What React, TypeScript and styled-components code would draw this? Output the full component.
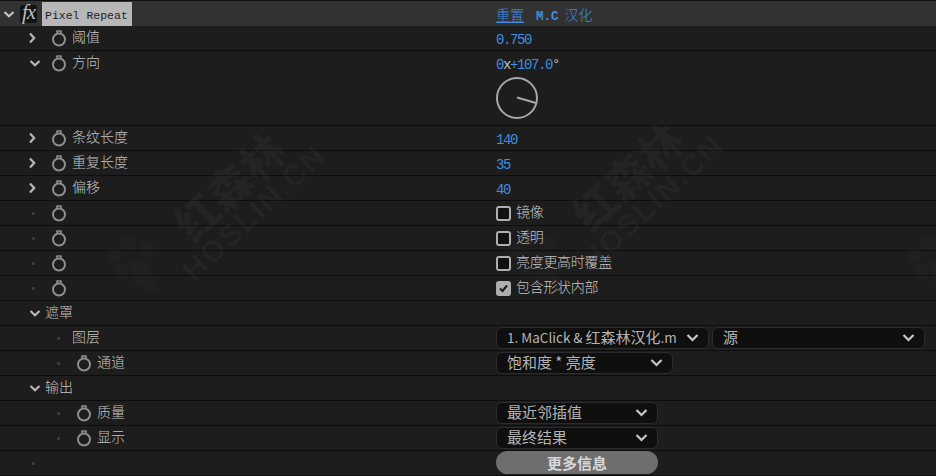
import React from 'react';
import styled, { createGlobalStyle } from 'styled-components';

const GlobalStyle = createGlobalStyle`
    html, body {
        margin: 0;
        padding: 0;
        background: #1d1d1d;
    }
`;

const CJK = `"Noto Sans CJK SC", "Liberation Sans", sans-serif`;
const MONO = `"Liberation Mono", "Noto Sans CJK SC", monospace`;

const Panel = styled.div`
    position: relative;
    width: 936px;
    height: 476px;
    overflow: hidden;
    background: #1d1d1d;
    border-top: 1px solid #0d0d0d;
    box-sizing: border-box;
    font-family: ${CJK};
    font-size: 14px;
    font-weight: 300;
    color: #c2c2c2;
`;

const HeaderRow = styled.div`
    display: grid;
    grid-template-columns: 496px 1fr;
    height: 25px;
    background: #323232;
`;

const HeaderName = styled.div`
    display: flex;
    align-items: center;
    padding-left: 3px;
`;

const FxBadge = styled.div`
    width: 17px;
    height: 18px;
    margin-left: 4px;
    border-radius: 3px;
    background: #131313;
    color: #bcbcbc;
    font-family: "Liberation Serif", serif;
    font-style: italic;
    font-size: 21px;
    line-height: 15px;
    letter-spacing: -1px;
    text-align: center;
`;

const EffectName = styled.div`
    width: 90px;
    height: 24px;
    margin-left: 5px;
    box-sizing: border-box;
    padding: 3px 0 0 3px;
    background: #b7b7b7;
    color: #222;
    font-family: ${MONO};
    font-size: 11.5px;
    line-height: 22px;
    white-space: nowrap;
`;

const HeaderValue = styled.div`
    display: flex;
    align-items: center;
    gap: 12px;
    color: #3f8ee0;
`;

const ResetLink = styled.span`
    text-decoration: underline;
    text-underline-offset: 2px;
`;

const CreditText = styled.span`
    white-space: pre;
`;

const CreditLatin = styled.span`
    font-family: ${MONO};
    font-size: 12.5px;
    font-weight: 700;
    margin-right: 6px;
`;

const Row = styled.div<{ $tall?: boolean }>`
    display: grid;
    grid-template-columns: 496px 1fr;
    height: ${(p) => (p.$tall ? 75 : 25)}px;
    box-sizing: border-box;
    border-bottom: 1px solid #0d0d0d;
`;

const NameCell = styled.div<{ $indent: number }>`
    display: flex;
    align-items: flex-start;
    height: 24px;
    padding-left: ${(p) => p.$indent}px;
`;

const TwirlSlot = styled.div<{ $width: number; $pad?: number }>`
    display: flex;
    align-items: center;
    flex: none;
    width: ${(p) => p.$width}px;
    height: 24px;
    box-sizing: border-box;
    padding-left: ${(p) => p.$pad ?? 0}px;
`;

const Dot = styled.span`
    width: 3px;
    height: 3px;
    margin-left: 7px;
    background: #3a3a3a;
`;

const WatchSlot = styled.div`
    display: flex;
    align-items: center;
    flex: none;
    width: 22px;
    height: 24px;
    padding-left: 1px;
    box-sizing: border-box;
`;

const Label = styled.span`
    line-height: 20px;
    white-space: nowrap;
`;

const ValueCell = styled.div`
    display: flex;
    flex-direction: column;
    align-items: flex-start;
    min-width: 0;
`;

const NumberValue = styled.div`
    height: 24px;
    padding-top: 4px;
    box-sizing: border-box;
    font-family: ${MONO};
    font-size: 14px;
    line-height: 20px;
    letter-spacing: -1.4px;
    color: #3f8ee0;
`;

const Multiplier = styled.span`
    color: #c2c2c2;
`;

const Dial = styled.svg`
    display: block;
    margin-top: 2px;
`;

const CheckRow = styled.label`
    display: flex;
    align-items: center;
    gap: 5px;
    height: 24px;
`;

const CheckLabel = styled.span`
    padding-bottom: 4px;
    letter-spacing: -0.3px;
    white-space: nowrap;
`;

const CheckBox = styled.span<{ $checked?: boolean }>`
    display: flex;
    align-items: center;
    justify-content: center;
    width: 15px;
    height: 15px;
    box-sizing: border-box;
    border: 2px solid #aeaeae;
    border-radius: 3px;
    background: ${(p) => (p.$checked ? '#aeaeae' : '#111')};
`;

const SelectRow = styled.div`
    display: flex;
    gap: 3px;
    padding-top: 1px;
`;

const Select = styled.div<{ $width: number }>`
    display: flex;
    align-items: center;
    gap: 9px;
    width: ${(p) => p.$width}px;
    height: 22px;
    box-sizing: border-box;
    padding: 0 9px 0 10px;
    background: #0f0f0f;
    border: 1px solid #2b2b2b;
    border-radius: 6px;
    color: #b4b4b4;
`;

const SelectText = styled.span`
    flex: 1;
    min-width: 0;
    height: 20px;
    margin-bottom: 3px;
    overflow: hidden;
    white-space: nowrap;
    font-size: 15px;
    font-weight: 400;
    line-height: 20px;
`;

const SelectLatin = styled.span`
    font-size: 13.5px;
`;

const MoreButton = styled.div`
    width: 162px;
    height: 23px;
    border-radius: 12px;
    background: #6e6e6e;
    color: #d8d8d8;
    font-weight: 700;
    font-size: 15px;
    line-height: 23px;
    text-align: center;
`;

const Watermark = styled.div<{ $x: number; $y: number }>`
    position: absolute;
    left: ${(p) => p.$x}px;
    top: ${(p) => p.$y}px;
    transform: rotate(-43deg);
    transform-origin: center;
    text-align: center;
    color: rgba(255, 255, 255, 0.03);
    pointer-events: none;
    white-space: nowrap;
`;

const WatermarkTitle = styled.div`
    font-family: ${CJK};
    font-size: 44px;
    font-weight: 900;
    line-height: 46px;
`;

const WatermarkSub = styled.div`
    font-family: "Liberation Sans", sans-serif;
    font-size: 30px;
    font-weight: 700;
    line-height: 30px;
    letter-spacing: 2px;
`;

const Blob = styled.svg<{ $x: number; $y: number }>`
    position: absolute;
    left: ${(p) => p.$x}px;
    top: ${(p) => p.$y}px;
    pointer-events: none;
`;

const Chevron: React.FC<{ open: boolean; strong?: boolean }> = ({ open, strong }) => (
    <svg width="12" height="12" viewBox="0 0 12 12" style={{ flex: 'none' }}>
        <path
            d={open ? 'M1.5 4 L6 8.2 L10.5 4' : 'M4 1.5 L8.2 6 L4 10.5'}
            fill="none"
            stroke={strong ? '#c4c4c4' : '#b8b8b8'}
            strokeWidth="2.2"
        />
    </svg>
);

const Stopwatch: React.FC = () => (
    <svg width="16" height="18" viewBox="0 0 16 18">
        <circle cx="8" cy="10.5" r="6" fill="none" stroke="#8e8e8e" strokeWidth="2" />
        <path d="M5.5 2 H10.5 M5.5 2 L6.5 4.5 M10.5 2 L9.5 4.5" fill="none" stroke="#8e8e8e" strokeWidth="1.5" />
    </svg>
);

const SmallChevron: React.FC = () => (
    <svg width="13" height="10" viewBox="0 0 13 10" style={{ flex: 'none' }}>
        <path d="M1.5 2 L6.5 7 L11.5 2" fill="none" stroke="#c8c8c8" strokeWidth="2.2" />
    </svg>
);

const Paw: React.FC<{ x: number; y: number }> = ({ x, y }) => (
    <Blob $x={x} $y={y} width="70" height="70" viewBox="0 0 80 80" fill="rgba(255,255,255,0.014)">
        <circle cx="14" cy="30" r="8" />
        <circle cx="30" cy="16" r="10" />
        <circle cx="50" cy="22" r="9" />
        <circle cx="22" cy="48" r="9" />
        <path d="M30 34 L52 36 L66 74 L54 72 L34 58 Z" />
    </Blob>
);

const simpleRows = [
    { name: '条纹长度', value: '140' },
    { name: '重复长度', value: '35' },
    { name: '偏移', value: '40' },
];

const checkRows = [
    { name: '镜像', checked: false },
    { name: '透明', checked: false },
    { name: '亮度更高时覆盖', checked: false },
    { name: '包含形状内部', checked: true },
];

const App: React.FC = () => {
    return (
        <Panel>
            <GlobalStyle />
            <HeaderRow>
                <HeaderName>
                    <TwirlSlot $width={13}>
                        <Chevron open strong />
                    </TwirlSlot>
                    <FxBadge>fx</FxBadge>
                    <EffectName>Pixel Repeat</EffectName>
                </HeaderName>
                <HeaderValue>
                    <ResetLink>重置</ResetLink>
                    <CreditText><CreditLatin>M.C</CreditLatin>汉化</CreditText>
                </HeaderValue>
            </HeaderRow>

            <Row>
                <NameCell $indent={25}>
                    <TwirlSlot $width={25} $pad={1}><Chevron open={false} /></TwirlSlot>
                    <WatchSlot><Stopwatch /></WatchSlot>
                    <Label>阈值</Label>
                </NameCell>
                <ValueCell><NumberValue>0.750</NumberValue></ValueCell>
            </Row>

            <Row $tall>
                <NameCell $indent={25}>
                    <TwirlSlot $width={25} $pad={4}><Chevron open /></TwirlSlot>
                    <WatchSlot><Stopwatch /></WatchSlot>
                    <Label>方向</Label>
                </NameCell>
                <ValueCell>
                    <NumberValue>0<Multiplier>x</Multiplier>+107.0<Multiplier>°</Multiplier></NumberValue>
                    <Dial width="44" height="44" viewBox="0 0 44 44">
                        <circle cx="21" cy="21" r="20" fill="none" stroke="#a8a8a8" strokeWidth="2" />
                        <path d="M21 20.5 L40 26" stroke="#a8a8a8" strokeWidth="2" />
                    </Dial>
                </ValueCell>
            </Row>

            {simpleRows.map((row) => (
                <Row key={row.name}>
                    <NameCell $indent={25}>
                        <TwirlSlot $width={25} $pad={1}><Chevron open={false} /></TwirlSlot>
                        <WatchSlot><Stopwatch /></WatchSlot>
                        <Label>{row.name}</Label>
                    </NameCell>
                    <ValueCell><NumberValue>{row.value}</NumberValue></ValueCell>
                </Row>
            ))}

            {checkRows.map((row) => (
                <Row key={row.name}>
                    <NameCell $indent={25}>
                        <TwirlSlot $width={25}><Dot /></TwirlSlot>
                        <WatchSlot><Stopwatch /></WatchSlot>
                    </NameCell>
                    <ValueCell>
                        <CheckRow>
                            <CheckBox $checked={row.checked}>
                                {row.checked && (
                                    <svg width="11" height="11" viewBox="0 0 11 11">
                                        <path d="M2 5.5 L4.5 8 L9 2.5" fill="none" stroke="#1a1a1a" strokeWidth="2" />
                                    </svg>
                                )}
                            </CheckBox>
                            <CheckLabel>{row.name}</CheckLabel>
                        </CheckRow>
                    </ValueCell>
                </Row>
            ))}

            <Row>
                <NameCell $indent={25}>
                    <TwirlSlot $width={20} $pad={4}><Chevron open /></TwirlSlot>
                    <Label>遮罩</Label>
                </NameCell>
                <ValueCell />
            </Row>
            <Row>
                <NameCell $indent={50}>
                    <TwirlSlot $width={22}><Dot /></TwirlSlot>
                    <Label>图层</Label>
                </NameCell>
                <ValueCell>
                    <SelectRow>
                        <Select $width={213}>
                            <SelectText><SelectLatin>1. MaClick &amp; </SelectLatin>红森林汉化<SelectLatin>.mp4</SelectLatin></SelectText>
                            <SmallChevron />
                        </Select>
                        <Select $width={213}>
                            <SelectText>源</SelectText>
                            <SmallChevron />
                        </Select>
                    </SelectRow>
                </ValueCell>
            </Row>
            <Row>
                <NameCell $indent={50}>
                    <TwirlSlot $width={25}><Dot /></TwirlSlot>
                    <WatchSlot><Stopwatch /></WatchSlot>
                    <Label>通道</Label>
                </NameCell>
                <ValueCell>
                    <SelectRow>
                        <Select $width={177}>
                            <SelectText>饱和度 * 亮度</SelectText>
                            <SmallChevron />
                        </Select>
                    </SelectRow>
                </ValueCell>
            </Row>
            <Row>
                <NameCell $indent={25}>
                    <TwirlSlot $width={20} $pad={4}><Chevron open /></TwirlSlot>
                    <Label>输出</Label>
                </NameCell>
                <ValueCell />
            </Row>
            <Row>
                <NameCell $indent={50}>
                    <TwirlSlot $width={25}><Dot /></TwirlSlot>
                    <WatchSlot><Stopwatch /></WatchSlot>
                    <Label>质量</Label>
                </NameCell>
                <ValueCell>
                    <SelectRow>
                        <Select $width={162}>
                            <SelectText>最近邻插值</SelectText>
                            <SmallChevron />
                        </Select>
                    </SelectRow>
                </ValueCell>
            </Row>
            <Row>
                <NameCell $indent={50}>
                    <TwirlSlot $width={25}><Dot /></TwirlSlot>
                    <WatchSlot><Stopwatch /></WatchSlot>
                    <Label>显示</Label>
                </NameCell>
                <ValueCell>
                    <SelectRow>
                        <Select $width={162}>
                            <SelectText>最终结果</SelectText>
                            <SmallChevron />
                        </Select>
                    </SelectRow>
                </ValueCell>
            </Row>
            <Row>
                <NameCell $indent={25}>
                    <TwirlSlot $width={25}><Dot /></TwirlSlot>
                </NameCell>
                <ValueCell>
                    <MoreButton>更多信息</MoreButton>
                </ValueCell>
            </Row>

            <Watermark $x={147} $y={157}>
                <WatermarkTitle>红森林</WatermarkTitle>
                <WatermarkSub>HOSLIN.CN</WatermarkSub>
            </Watermark>
            <Watermark $x={545} $y={147}>
                <WatermarkTitle>红森林</WatermarkTitle>
                <WatermarkSub>HOSLIN.CN</WatermarkSub>
            </Watermark>
            <Paw x={102} y={228} />
            <Paw x={505} y={222} />
            <Paw x={902} y={228} />
        </Panel>
    );
};

export default App;
